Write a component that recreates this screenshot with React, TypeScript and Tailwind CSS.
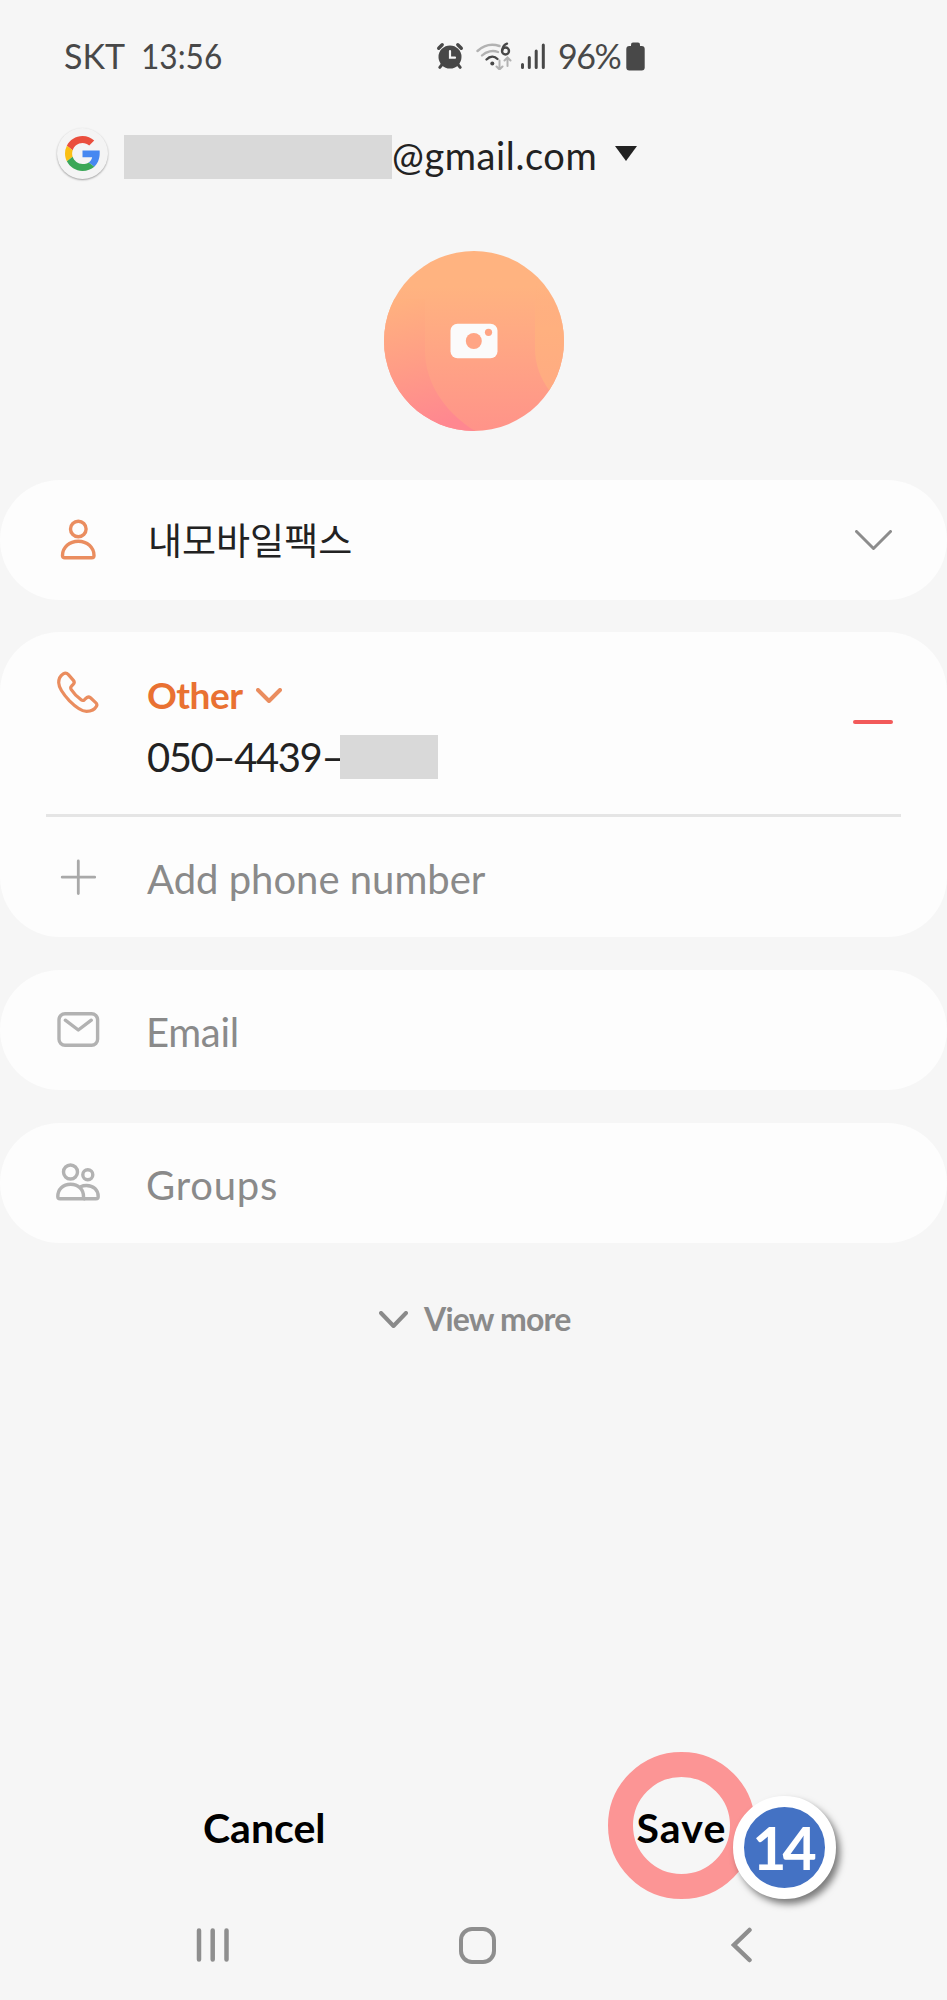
import React from "react";
import type { ReactNode } from "react";

function GoogleLogo() {
  return (
    <svg width="35" height="35" viewBox="0 0 48 48">
      <path fill="#ea4e3d" d="M24 9.5c3.54 0 6.71 1.22 9.21 3.6l6.85-6.85C35.9 2.38 30.47 0 24 0 14.62 0 6.51 5.38 2.56 13.22l7.98 6.19C12.43 13.72 17.74 9.5 24 9.5z" />
      <path fill="#4688f1" d="M47.5 20H24v9h13.3c-.6 3-2.3 5.5-4.8 7.2l7.73 6C44.9 38 48.3 31 47.5 20z" />
      <path fill="#fabf13" d="M10.53 28.59A14.5 14.5 0 0 1 9.77 24c0-1.6.27-3.14.76-4.59l-7.98-6.19A23.9 23.9 0 0 0 0 24c0 3.88.92 7.54 2.56 10.78l7.97-6.19z" />
      <path fill="#3aa757" d="M24 48c6.48 0 11.93-2.13 16.23-5.8l-7.73-6c-2.15 1.45-4.92 2.3-8.5 2.3-6.26 0-11.57-4.22-13.47-9.91l-7.98 6.19C6.51 42.62 14.62 48 24 48z" />
    </svg>
  );
}

function AlarmIcon() {
  return (
    <svg width="28" height="28" viewBox="0 0 28 28" fill="none" stroke="#484848" strokeLinecap="round">
      <circle cx="14" cy="15" r="11.5" fill="#484848" stroke="none" />
      <path d="M2.7 6.2 6.2 2.8M25.3 6.2 21.8 2.8" strokeWidth="3.4" />
      <path d="m6.5 22-2.7 3.4M21.5 22l2.7 3.4" strokeWidth="3" />
      <path d="M14 9.2v6.5h5" stroke="#f6f6f6" strokeWidth="2.2" />
    </svg>
  );
}

function WifiIcon() {
  return (
    <svg width="36" height="28" viewBox="0 0 36 28" fill="none" strokeLinecap="round" strokeWidth="2.4">
      <path d="M1.5 9C8 3 16 1.5 23.500 4" stroke="#b2b2b2" />
      <path d="M6 13.500C10.500 9 17 8 22 10" stroke="#b2b2b2" />
      <path d="M10.500 17.500C14 14 18.500 14 21.500 17" stroke="#484848" />
      <circle cx="16.300" cy="21.500" r="2" fill="#484848" />
      <circle cx="29.500" cy="9" r="3.500" stroke="#484848" />
      <path d="M26.300 8c.5-3 2-5.500 4.700-6.300" stroke="#484848" />
      <path d="M23.500 18.500v8.500M20.500 24.500l3 3 3-3M31.500 24V15.500M28.500 18.500l3-3 3 3" stroke="#b2b2b2" strokeWidth="2" />
    </svg>
  );
}

function SignalIcon() {
  return (
    <svg width="26" height="28" viewBox="0 0 26 28" stroke="#484848" strokeWidth="3" strokeLinecap="round">
      <path d="M2.500 22.500v3M9.300 15.500v10M16.200 9v16.500M23.300 3v22.500" />
    </svg>
  );
}

function BatteryIcon() {
  return (
    <svg width="19" height="29" viewBox="0 0 19 29" fill="#484848">
      <rect x="5" y="0.500" width="9" height="8" rx="2" />
      <rect x="0.300" y="4" width="18.400" height="24.500" rx="3" />
    </svg>
  );
}

function CameraIcon() {
  return (
    <svg width="48" height="36" viewBox="0 0 48 36">
      <rect x="0.500" y="0.700" width="47" height="34.600" rx="7" fill="#fbfbfb" />
      <circle cx="23.800" cy="18" r="8" fill="#ffa585" />
      <circle cx="38.500" cy="9.300" r="3.600" fill="#ffa585" />
    </svg>
  );
}

function PersonIcon() {
  return (
    <svg width="44" height="44" viewBox="0 0 44 44" fill="none" stroke="#ea8d5f" strokeWidth="3.400">
      <circle cx="22.300" cy="11" r="7.800" />
      <path d="M6.500 37.500c0-8 7-14.300 15.800-14.300S38 29.500 38 37.500c0 1.500-.8 2.300-2.300 2.300H8.800c-1.500 0-2.300-.8-2.300-2.300z" />
    </svg>
  );
}

function PhoneIcon() {
  return (
    <svg width="44" height="44" viewBox="0 0 44 44" fill="none" stroke="#ea8d5f" strokeWidth="3.200" strokeLinejoin="round">
      <path d="M7.200 3.800C4.500 5.500 2.600 9 2.700 12.800c.2 6 5.300 12.200 10.800 18 5.500 5.500 11 10.500 17 10.500 4.500 0 8.500-2.200 10-5 .7-1.300.3-2.700-.8-3.700l-5.200-4.800c-1.500-1.200-3-1-4.200.2l-1.800 1.700c-1 .9-2.300.9-3.500 0-3.700-2.500-6.900-5.700-9.700-10-.8-1.300-.8-2.500.2-3.500l1.700-1.800c1.300-1.300 1.300-2.700.2-4l-5-5.800c-1.400-1.500-3.300-1.900-5.200-.8z" />
    </svg>
  );
}

function PlusIcon() {
  return (
    <svg width="44" height="44" viewBox="0 0 44 44" stroke="#a9a9a9" strokeWidth="2.800" strokeLinecap="round">
      <path d="M22.300 6v32.500M6.200 22.200h32.500" />
    </svg>
  );
}

function MailIcon() {
  return (
    <svg width="44" height="44" viewBox="0 0 44 44" fill="none" stroke="#b2b2b2" strokeWidth="3.400" strokeLinecap="round" strokeLinejoin="round">
      <rect x="3" y="5.700" width="38.600" height="31.600" rx="6" />
      <path d="m9.300 12.200 13 9.800 13-9.800" />
    </svg>
  );
}

function GroupsIcon() {
  return (
    <svg width="44" height="44" viewBox="0 0 44 44" fill="none" stroke="#b2b2b2" strokeWidth="3.400">
      <circle cx="14.500" cy="11" r="7" />
      <circle cx="31.800" cy="13.700" r="5" />
      <path d="M1.800 35.500c0-7 5-12.300 12.800-12.300S27.500 28.500 27.500 35.500v2.300H4c-1.500 0-2.200-.8-2.200-2.300z" />
      <path d="M24.500 25.700c1.800-.8 4-1.200 6-1.200 7 0 11.700 4.500 11.700 11 0 1.500-.7 2.300-2.200 2.300H27.500" />
    </svg>
  );
}

type ChevronProps = {
  width: number;
  height: number;
  stroke: string;
  strokeWidth: number;
};

function Chevron({ width, height, stroke, strokeWidth }: ChevronProps) {
  const p = strokeWidth / 2;
  return (
    <svg width={width} height={height} fill="none" stroke={stroke} strokeWidth={strokeWidth} strokeLinecap="round" strokeLinejoin="round">
      <path d={`M${p} ${p}L${width / 2} ${height - p}L${width - p} ${p}`} />
    </svg>
  );
}

function FieldRow({ icon, children }: { icon: ReactNode; children: ReactNode }) {
  return (
    <section className="mt-[33px] h-[120px] rounded-[60px] bg-[#fdfdfd] pl-14 flex items-center">
      {icon}
      <span className="ml-[46px] mt-1 text-[40px] leading-none text-[#8a8a8a]">{children}</span>
    </section>
  );
}

function StatusBar() {
  return (
    <header className="h-28 pl-16 flex items-center text-[34px] leading-none text-[#484848]">
      <span className="w-[77px]">SKT</span>
      <span className="w-[295px]">
        <span className="inline-block origin-left scale-x-[0.93]">13:56</span>
      </span>
      <AlarmIcon />
      <span className="ml-3 flex"><WifiIcon /></span>
      <span className="ml-2 flex"><SignalIcon /></span>
      <span className="ml-3 w-[68px] tracking-[-1.500px]">96%</span>
      <BatteryIcon />
    </header>
  );
}

function App() {
  return (
    <div className="w-[947px] h-[2000px] overflow-hidden bg-[#f6f6f6] text-[#222222] font-[Lato,'Noto_Sans_CJK_KR',sans-serif]">
      <StatusBar />

      <div className="mt-4 h-[54px] pl-[57px] flex items-center">
        <div className="-mt-1 size-[51px] rounded-full bg-[#f4f4f4] shadow-[0_1px_2px_rgba(0,0,0,0.35)] flex items-center justify-center">
          <GoogleLogo />
        </div>
        <div className="ml-4 mt-1 w-[268px] h-11 bg-[#d9d9d9]" />
        <span className="w-[223px] text-[38px] leading-none tracking-[0.6px]">@gmail.com</span>
        <svg width="22" height="15" viewBox="0 0 22 15" className="-mt-1">
          <path d="M0 0h22L11 15z" fill="#222222" />
        </svg>
      </div>

      <div className="mt-[69px] mx-auto size-[180px] rounded-full overflow-hidden relative bg-linear-to-b from-[#ffb380] from-20% to-[#ff9389] flex items-center justify-center">
        <svg className="absolute inset-0" width="180" height="180" viewBox="0 0 180 180">
          <defs>
            <linearGradient id="left" gradientUnits="userSpaceOnUse" x1="20" y1="48" x2="50" y2="175">
              <stop offset="0" stopColor="#ffb17f" />
              <stop offset="0.500" stopColor="#ff9d86" />
              <stop offset="1" stopColor="#ff8790" />
            </linearGradient>
            <linearGradient id="right" x1="0" y1="0" x2="0" y2="1">
              <stop offset="0" stopColor="#ffb27f" stopOpacity="0" />
              <stop offset="0.400" stopColor="#ffb07f" />
              <stop offset="1" stopColor="#ffaa82" />
            </linearGradient>
          </defs>
          <path d="M0 48h41v52c0 30 18 60 50 80H0z" fill="url(#left)" />
          <path d="M151 30h29v120l-15-11c-8-11-14-25-14-41z" fill="url(#right)" />
        </svg>
        <div className="relative"><CameraIcon /></div>
      </div>

      <section className="mt-[49px] h-[120px] rounded-[60px] bg-[#fdfdfd] pl-14 pr-[55px] flex items-center">
        <PersonIcon />
        <span className="ml-12 flex-1 text-[37px] leading-none">내모바일팩스</span>
        <Chevron width={37} height={20} stroke="#8c8c8c" strokeWidth={3} />
      </section>

      <section className="mt-8 h-[305px] rounded-[60px] bg-[#fdfdfd]">
        <div className="h-[182px] pl-14 pr-[54px] pt-[38px] flex items-start">
          <PhoneIcon />
          <div className="ml-[47px] flex-1">
            <div className="mt-[3px] flex items-center text-[#e97132]">
              <span className="w-[109px] text-[37px] leading-[44px] font-bold tracking-[-0.5px]">Other</span>
              <Chevron width={26} height={15} stroke="#ea8d5f" strokeWidth={4} />
            </div>
            <div className="mt-[18px] flex items-center">
              <span className="w-[193px] text-[40px] leading-none tracking-[-1.4px] whitespace-nowrap">050–4439–</span>
              <div className="w-[98px] h-11 bg-[#d9d9d9]" />
            </div>
          </div>
          <div className="mt-[50px] w-10 h-[4px] rounded-full bg-[#f25a5a]" />
        </div>
        <div className="mx-[46px] h-[3px] bg-[#e5e5e5]" />
        <div className="h-[120px] pl-14 flex items-center">
          <PlusIcon />
          <span className="ml-[47px] mt-1 text-[40px] leading-none text-[#8a8a8a]">Add phone number</span>
        </div>
      </section>

      <FieldRow icon={<MailIcon />}><span className="tracking-[-0.3px]">Email</span></FieldRow>
      <FieldRow icon={<GroupsIcon />}><span className="tracking-[0.8px]">Groups</span></FieldRow>

      <div className="mt-[52px] h-12 pl-[379px] flex items-center text-[#8a8a8a]">
        <Chevron width={29} height={17} stroke="#8a8a8a" strokeWidth={4} />
        <span className="ml-4 text-[32px] leading-none font-bold tracking-[-0.8px]">View more</span>
      </div>

      <div className="mt-[409px] h-[147px] flex items-center text-black text-[41px] leading-none font-bold">
        <span className="ml-[203px] mt-1 w-[405px]">Cancel</span>
        <div className="relative size-[147px] rounded-full border-[25px] border-[#fc9595] flex items-center justify-center">
          <span className="mt-1 tracking-[1.2px]">Save</span>
          <div className="absolute left-[100px] top-[19px] size-[103px] rounded-full border-[11px] border-white bg-[#4472c4] shadow-[4px_5px_7px_rgba(0,0,0,0.5)] flex items-center justify-center text-white text-[59px] tracking-[-4px]">
            <span className="-ml-1">14</span>
          </div>
        </div>
      </div>

      <nav className="mt-[26px] h-10 pl-[196px] flex items-center">
        <svg width="34" height="36" viewBox="0 0 34 36" stroke="#8e8e8e" strokeWidth="4.500" strokeLinecap="round">
          <path d="M3 3.500v29M16.700 3.500v29M30.500 3.500v29" />
        </svg>
        <div className="ml-[229px] size-[37px] rounded-[13px] border-[4px] border-[#8e8e8e]" />
        <svg className="ml-[235px]" width="22" height="36" viewBox="0 0 22 36" fill="none" stroke="#8e8e8e" strokeWidth="4.500" strokeLinecap="round">
          <path d="M18.500 3 3 18l15.500 15" />
        </svg>
      </nav>
    </div>
  );
}

export default App;
